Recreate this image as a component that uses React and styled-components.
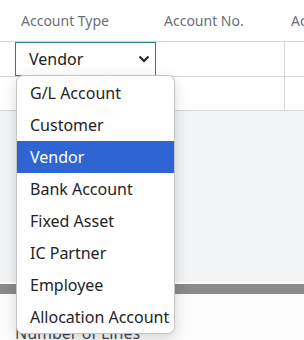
import React from 'react';
import styled, { createGlobalStyle } from 'styled-components';

const GlobalStyle = createGlobalStyle`
  body {
    margin: 0;
    background: #ffffff;
    font-family: 'Segoe UI', 'Noto Sans', 'Open Sans', sans-serif;
  }
`;

const Page = styled.div`
  position: relative;
  width: 304px;
  height: 340px;
  overflow: hidden;
  background: #ffffff;
`;

const Grid = styled.div`
  display: grid;
  grid-template-columns: 155px 129px 1fr;
`;

const HeadCell = styled.div`
  height: 41px;
  display: flex;
  align-items: center;
  padding-left: ${(p) => p.$pad}px;
  border-bottom: 1px solid #d6d6da;
  box-sizing: border-box;
  color: #6b6f78;
  font-size: 14px;
  white-space: nowrap;
  height: 42px;
`;

const Cell = styled.div`
  position: relative;
  height: 35px;
  box-sizing: border-box;
  border-bottom: 1px solid #d6d6da;
  border-left: ${(p) => (p.$divider ? '1px solid #d6d6da' : 'none')};
  height: ${(p) => p.$h || 35}px;
`;

const SelectBox = styled.div`
  position: absolute;
  left: 15px;
  top: 0;
  width: 141px;
  height: 34px;
  box-sizing: border-box;
  border: 1px solid #2e7e80;
  display: flex;
  align-items: center;
  justify-content: space-between;
  padding: 0 5px 0 13px;
  font-size: 16px;
  color: #212121;
  background: #ffffff;
`;

const GrayBand = styled.div`
  height: 171px;
  background: #f3f4f6;
  border-bottom: 2px solid #ffffff;
`;

const Splitter = styled.div`
  height: 10px;
  background: #8a8a8a;
`;

const Footer = styled.div`
  background: #fcfcfd;
  height: 60px;
  padding: 28px 0 0 15px;
  box-sizing: border-box;
`;

const FooterLabel = styled.div`
  font-size: 16px;
  color: #3c4a5c;
`;

const Menu = styled.ul`
  position: absolute;
  left: 16px;
  top: 75px;
  width: 159px;
  height: 259px;
  margin: 0;
  padding: 1px 0;
  box-sizing: border-box;
  list-style: none;
  background: #ffffff;
  border: 1px solid #c4c4c4;
  border-radius: 7px;
  box-shadow: 0 4px 14px rgba(0, 0, 0, 0.16);
  overflow: hidden;
`;

const Item = styled.li`
  height: 32px;
  display: flex;
  align-items: center;
  padding-left: 13px;
  font-size: 16px;
  white-space: nowrap;
  color: ${(p) => (p.$active ? '#ffffff' : '#242424')};
  background: ${(p) => (p.$active ? '#2f65d3' : 'transparent')};
`;

const Chevron = () => (
  <svg width="12" height="8" viewBox="0 0 12 8">
    <path d="M1.5 1.5 L6 6 L10.5 1.5" fill="none" stroke="#1f1f1f" strokeWidth="2" />
  </svg>
);

const options = [
  'G/L Account',
  'Customer',
  'Vendor',
  'Bank Account',
  'Fixed Asset',
  'IC Partner',
  'Employee',
  'Allocation Account',
];

export default function App() {
  return (
    <Page>
      <GlobalStyle />
      <Grid>
        <HeadCell $pad={21}>Account Type</HeadCell>
        <HeadCell $pad={9}>Account No.</HeadCell>
        <HeadCell $pad={7}>Account Name</HeadCell>

        <Cell>
          <SelectBox>
            Vendor
            <Chevron />
          </SelectBox>
        </Cell>
        <Cell />
        <Cell $divider />

        <Cell $h={34} />
        <Cell $h={34} />
        <Cell $h={34} $divider />
      </Grid>
      <GrayBand />
      <Splitter />
      <Footer>
        <FooterLabel>Number of Lines</FooterLabel>
      </Footer>
      <Menu>
        {options.map((o) => (
          <Item key={o} $active={o === 'Vendor'}>
            {o}
          </Item>
        ))}
      </Menu>
    </Page>
  );
}
